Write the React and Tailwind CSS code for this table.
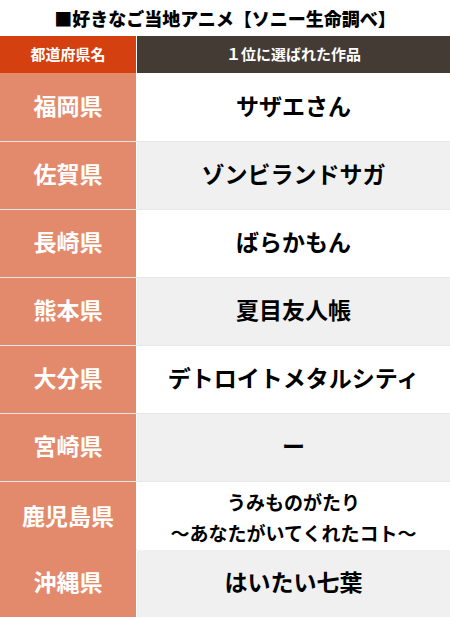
export default function App() {
  const rows = [
    { pref: "福岡県", title: ["サザエさん"] },
    { pref: "佐賀県", title: ["ゾンビランドサガ"] },
    { pref: "長崎県", title: ["ばらかもん"] },
    { pref: "熊本県", title: ["夏目友人帳"] },
    { pref: "大分県", title: ["デトロイトメタルシティ"] },
    { pref: "宮崎県", title: ["ー"] },
    { pref: "鹿児島県", title: ["うみものがたり", "～あなたがいてくれたコト～"] },
    { pref: "沖縄県", title: ["はいたい七葉"] },
  ];

  return (
    <div className="w-[450px] h-[618px] bg-white overflow-hidden font-['Noto_Sans_CJK_JP',sans-serif]">
      <h1 className="h-9 flex items-center justify-center text-[18px] font-black text-black">
        ■好きなご当地アニメ【ソニー生命調べ】
      </h1>
      <div className="grid grid-cols-[136px_1fr] gap-x-px h-[37px] text-white font-bold text-[15px]">
        <div className="bg-[#d4400f] flex items-center justify-center">都道府県名</div>
        <div className="bg-[#443b35] flex items-center justify-center">１位に選ばれた作品</div>
      </div>
      {rows.map((r, i) => (
        <div
          key={r.pref}
          className={`grid grid-cols-[136px_1fr] gap-x-px h-[68px] ${i > 0 ? "border-t border-[#e8e8e8]" : ""}`}
        >
          <div className="bg-[#e48a6c] flex items-center justify-center text-white font-bold text-[23px] pb-1">
            {r.pref}
          </div>
          <div
            className={`${i % 2 === 1 ? "bg-[#f0f0f0]" : "bg-white"} flex flex-col items-center justify-center text-black font-bold pb-1 ${r.title.length > 1 ? "text-[19px] leading-[31px] pt-1" : "text-[23px]"}`}
          >
            {r.title.map((t) => (
              <span key={t}>{t}</span>
            ))}
          </div>
        </div>
      ))}
    </div>
  );
}
